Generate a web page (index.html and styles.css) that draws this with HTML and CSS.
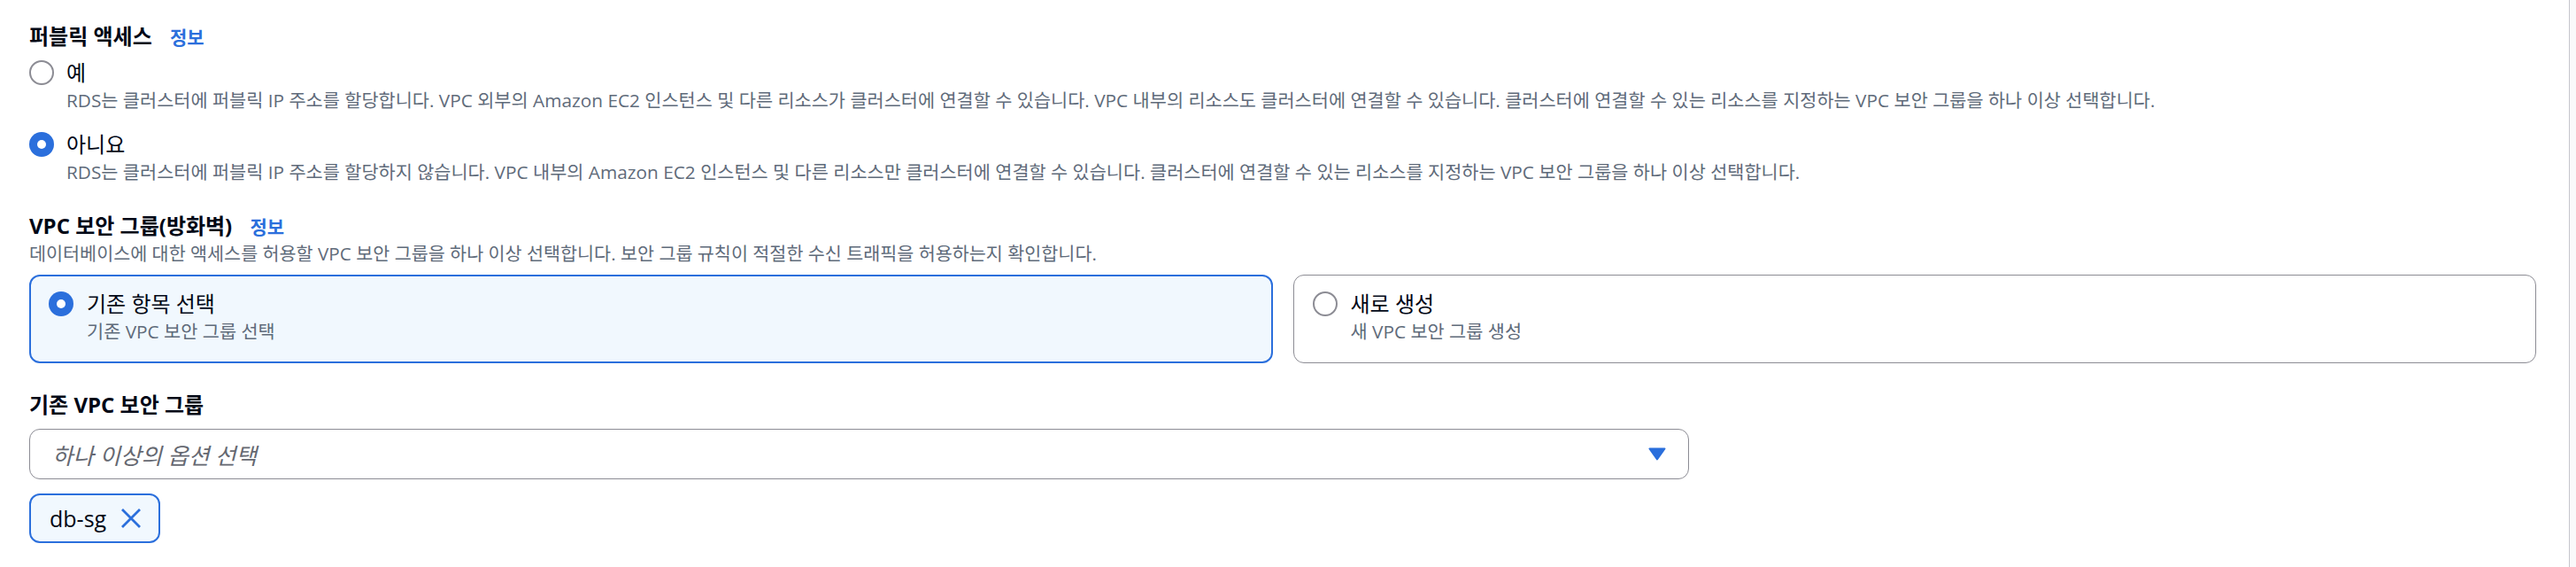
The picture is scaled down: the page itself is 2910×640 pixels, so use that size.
FILE: index.html
```html
<!DOCTYPE html>
<html lang="ko">
<head>
<meta charset="utf-8">
<title>연결</title>
<link rel="stylesheet" href="styles.css">
</head>
<body>
<div class="layout">
  <main class="main">
    <section class="field field-access">
      <div class="label">퍼블릭 액세스 <a class="info" href="#">정보</a></div>
      <div class="radio-group">
        <label class="radio">
          <svg class="radio-icon" viewBox="0 0 28 28" width="28" height="28"><circle cx="14" cy="14" r="13" fill="#fff" stroke="#8c8c94" stroke-width="2"/></svg>
          <span class="radio-text">
            <span class="radio-label">예</span>
            <span class="radio-desc">RDS는 클러스터에 퍼블릭 IP 주소를 할당합니다. VPC 외부의 Amazon EC2 인스턴스 및 다른 리소스가 클러스터에 연결할 수 있습니다. VPC 내부의 리소스도 클러스터에 연결할 수 있습니다. 클러스터에 연결할 수 있는 리소스를 지정하는 VPC 보안 그룹을 하나 이상 선택합니다.</span>
          </span>
        </label>
        <label class="radio">
          <svg class="radio-icon" viewBox="0 0 28 28" width="28" height="28"><circle cx="14" cy="14" r="14" fill="#2b6fdc"/><circle cx="14" cy="14" r="5" fill="#fff"/></svg>
          <span class="radio-text">
            <span class="radio-label">아니요</span>
            <span class="radio-desc">RDS는 클러스터에 퍼블릭 IP 주소를 할당하지 않습니다. VPC 내부의 Amazon EC2 인스턴스 및 다른 리소스만 클러스터에 연결할 수 있습니다. 클러스터에 연결할 수 있는 리소스를 지정하는 VPC 보안 그룹을 하나 이상 선택합니다.</span>
          </span>
        </label>
      </div>
    </section>

    <section class="field field-sg">
      <div class="label">VPC 보안 그룹(방화벽) <a class="info" href="#">정보</a></div>
      <div class="field-desc">데이터베이스에 대한 액세스를 허용할 VPC 보안 그룹을 하나 이상 선택합니다. 보안 그룹 규칙이 적절한 수신 트래픽을 허용하는지 확인합니다.</div>
      <div class="tiles">
        <label class="tile tile-selected">
          <svg class="radio-icon" viewBox="0 0 28 28" width="28" height="28"><circle cx="14" cy="14" r="14" fill="#2b6fdc"/><circle cx="14" cy="14" r="5" fill="#fff"/></svg>
          <span class="radio-text">
            <span class="radio-label">기존 항목 선택</span>
            <span class="radio-desc">기존 VPC 보안 그룹 선택</span>
          </span>
        </label>
        <label class="tile">
          <svg class="radio-icon" viewBox="0 0 28 28" width="28" height="28"><circle cx="14" cy="14" r="13" fill="#fff" stroke="#8c8c94" stroke-width="2"/></svg>
          <span class="radio-text">
            <span class="radio-label">새로 생성</span>
            <span class="radio-desc">새 VPC 보안 그룹 생성</span>
          </span>
        </label>
      </div>
    </section>

    <section class="field field-existing">
      <div class="label">기존 VPC 보안 그룹</div>
      <div class="select">
        <span class="placeholder">하나 이상의 옵션 선택</span>
        <svg class="caret" viewBox="0 0 20 15" width="20" height="15"><path d="M1.5 1.5 H18.5 L10 13.5 Z" fill="#2b6fdc" stroke="#2b6fdc" stroke-width="2" stroke-linejoin="round"/></svg>
      </div>
      <div class="tokens">
        <span class="token">db-sg
          <svg class="token-x" viewBox="0 0 24 24" width="24" height="24"><path d="M2 2 L22 22 M22 2 L2 22" stroke="#2b6fdc" stroke-width="2.8" fill="none"/></svg>
        </span>
      </div>
    </section>
  </main>
  <div class="gutter"></div>
</div>
</body>
</html>
```

FILE: styles.css
```css
* { box-sizing: border-box; }

html, body {
  margin: 0;
  padding: 0;
  background: #ffffff;
}

body {
  font-family: "Open Sans", "Noto Sans CJK KR", sans-serif;
  color: #000716;
  width: 2910px;
  height: 640px;
  overflow: hidden;
}

.layout {
  display: flex;
  height: 640px;
}

.main {
  flex: 1;
  padding: 23px 37px 0 33px;
  display: flex;
  flex-direction: column;
}

.gutter {
  width: 8px;
  border-left: 1px solid #c6c6cd;
  background: #f9f9fa;
}

.label {
  font-size: 24px;
  font-weight: 700;
  line-height: 36px;
  height: 36px;
  white-space: nowrap;
}

.info {
  color: #2b6fdc;
  font-size: 21px;
  font-weight: 700;
  text-decoration: none;
  margin-left: 14px;
}

.radio-group {
  display: flex;
  flex-direction: column;
  gap: 19px;
  margin-top: 6px;
}

.radio {
  display: flex;
  gap: 14px;
  align-items: flex-start;
}

.radio-icon {
  flex: none;
  margin-top: 3px;
  display: block;
}

.radio-text {
  display: flex;
  flex-direction: column;
}

.radio-label {
  font-size: 24px;
  line-height: 34px;
  height: 34px;
  white-space: nowrap;
}

.radio-desc {
  font-size: 20.8px;
  line-height: 28px;
  color: #5f6b7a;
  white-space: nowrap;
}

.field-sg {
  margin-top: 29px;
}

.field-sg .label {
  height: 35px;
  line-height: 35px;
}

.field-desc {
  font-size: 20.7px;
  line-height: 28px;
  color: #5f6b7a;
  white-space: nowrap;
}

.tiles {
  display: grid;
  grid-template-columns: 1fr 1fr;
  gap: 23px;
  margin-top: 10px;
}

.tile {
  display: flex;
  gap: 15px;
  align-items: flex-start;
  height: 100px;
  border: 1px solid #8c8c94;
  border-radius: 12px;
  padding: 15px 21px 0 21px;
  background: #ffffff;
}

.tile-selected {
  border: 2px solid #2b6fdc;
  background: #f1f8fe;
  padding: 14px 20px 0 20px;
}

.field-existing {
  margin-top: 29px;
}

.select {
  margin-top: 9px;
  width: 1875px;
  height: 57px;
  border: 1px solid #8c8c94;
  border-radius: 12px;
  display: flex;
  align-items: center;
  justify-content: space-between;
  padding: 0 25px 0 25px;
}

.placeholder {
  font-size: 25.5px;
  font-style: italic;
  color: #656871;
}

.caret {
  display: block;
}

.tokens {
  margin-top: 16px;
  display: flex;
}

.token {
  display: flex;
  align-items: center;
  gap: 16px;
  height: 56px;
  padding: 0 19px 0 21px;
  border: 2px solid #2b6fdc;
  border-radius: 12px;
  background: #f1f8fe;
  font-size: 25px;
  color: #000716;
}

.token-x {
  display: block;
}
```
